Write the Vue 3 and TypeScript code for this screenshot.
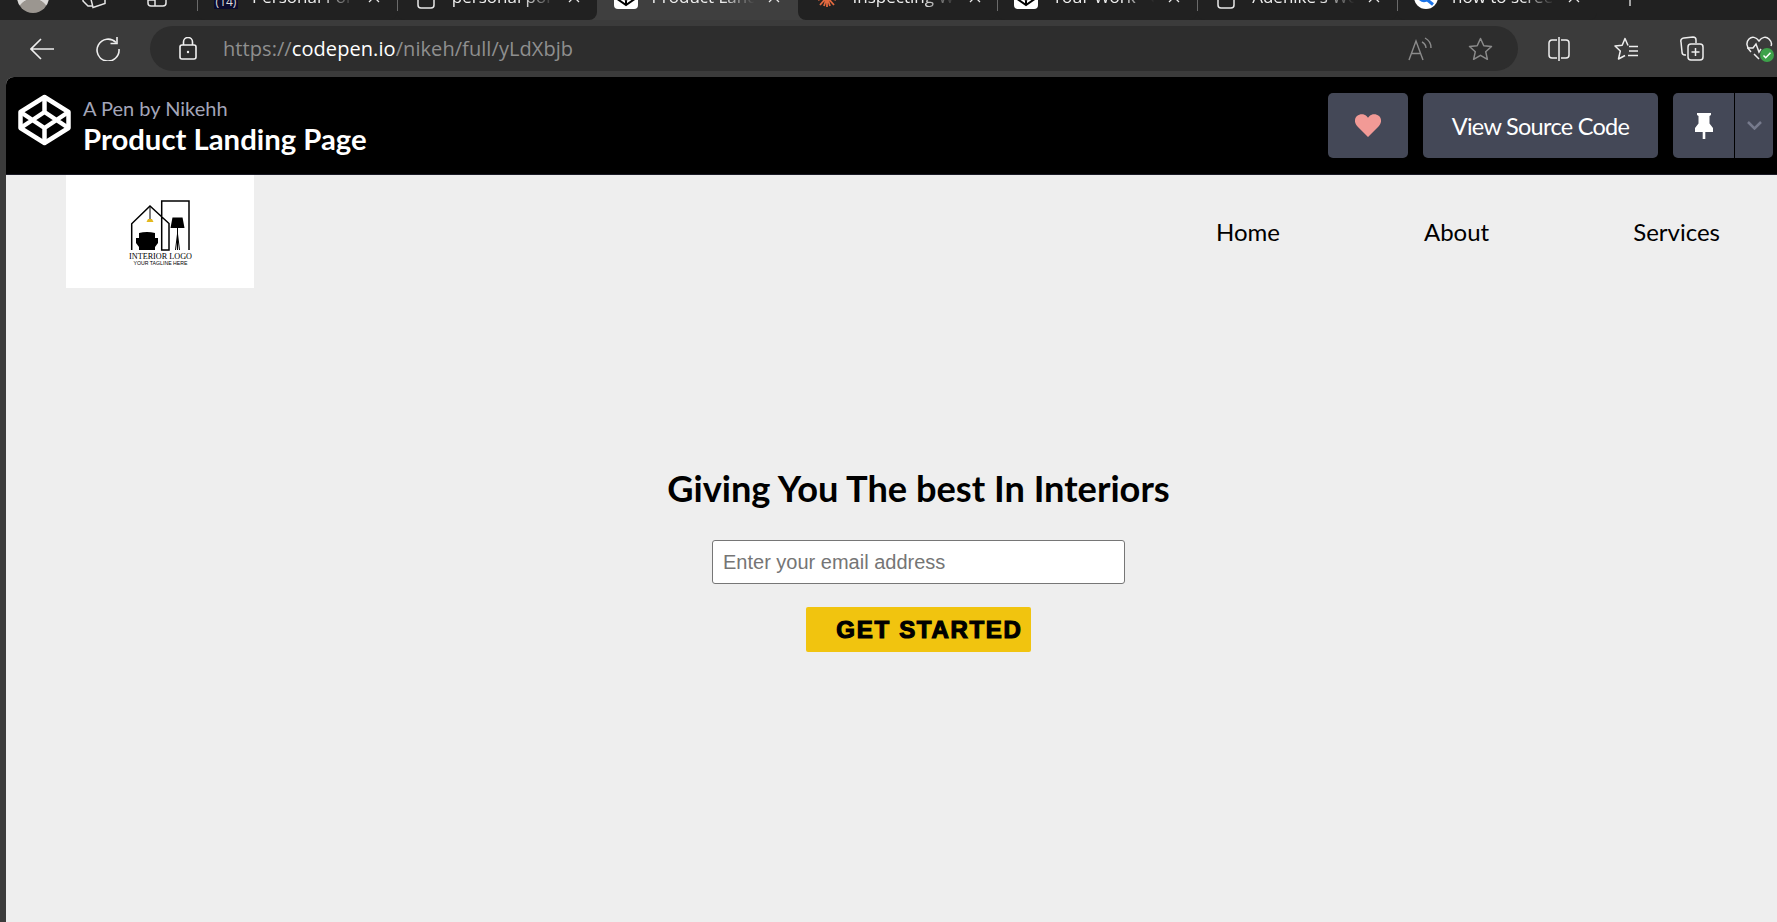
<script setup lang="ts">
interface Tab {
    title: string;
    icon: "badge" | "page" | "pen" | "spark" | "search";
    active?: boolean;
}

const tabs: Tab[] = [
    { title: "Personal Portfolio", icon: "badge" },
    { title: "personal portfolio", icon: "page" },
    { title: "Product Landing Page", icon: "pen", active: true },
    { title: "Inspecting Web", icon: "spark" },
    { title: "Your Work - CodePen", icon: "pen" },
    { title: "Adenike's Website", icon: "page" },
    { title: "how to screenshot", icon: "search" },
];

const navLinks = ["Home", "About", "Services"];
</script>

<template>
    <div class="browser">
        <div class="tabstrip">
            <div class="strip-start">
                <span class="avatar"></span>
                <svg class="strip-icon workspaces" width="24" height="24" viewBox="0 0 24 24" fill="none" stroke="#e6e6e6" stroke-width="1.5">
                    <path d="M1 10v6l5 5h4" />
                    <path d="M8 10l3 12.500 12-4V10" />
                </svg>
                <svg class="strip-icon tabs-icon" width="20" height="24" viewBox="0 0 20 24" fill="none" stroke="#e6e6e6" stroke-width="1.5">
                    <rect x="1" y="4" width="18" height="18" rx="3" />
                    <path d="M1 16h7v6" />
                </svg>
            </div>
            <div
                v-for="tab in tabs"
                :key="tab.title"
                :class="['tab', { 'tab-active': tab.active }]"
            >
                <span class="tab-icon">
                    <span v-if="tab.icon === 'badge'" class="fav-badge">(14)</span>
                    <svg v-else-if="tab.icon === 'page'" width="18" height="24" viewBox="0 0 18 24" fill="none" stroke="#e8e8e8" stroke-width="1.5">
                        <rect x="1" y="2" width="16" height="21" rx="3" />
                    </svg>
                    <svg v-else-if="tab.icon === 'pen'" width="24" height="24" viewBox="0 0 24 24">
                        <rect width="24" height="24" rx="4" fill="#fff" />
                        <path d="M12 4l8 5.500v5L12 20l-8-5.500v-5zM4 9.500l8 5.500 8-5.500M4 14.500l8-5.500 8 5.500M12 4v5M12 15v5" fill="none" stroke="#000" stroke-width="2" />
                    </svg>
                    <svg v-else-if="tab.icon === 'spark'" width="20" height="20" viewBox="0 0 20 20" stroke="#e2693f" stroke-width="1.800">
                        <path d="M10 10V20M10 10L3 18M10 10l7 8M10 10L1 13M10 10l9 3M10 10L0 8M10 10l10-2M10 10l-3 9M10 10l3 9" />
                    </svg>
                    <svg v-else width="24" height="24" viewBox="0 0 24 24">
                        <circle cx="12" cy="12" r="12" fill="#fff" />
                        <circle cx="10" cy="11" r="5" fill="none" stroke="#1a73e8" stroke-width="2.500" />
                        <path d="M13.500 15l5.500 4.500" stroke="#1a73e8" stroke-width="3" />
                    </svg>
                </span>
                <span class="tab-title">{{ tab.title }}</span>
                <svg class="tab-close" width="12" height="12" viewBox="0 0 12 12" stroke="#e8e8e8" stroke-width="1.300">
                    <path d="M1 1l10 10M11 1L1 11" />
                </svg>
            </div>
            <svg class="new-tab" width="14" height="14" viewBox="0 0 14 14" stroke="#e8e8e8" stroke-width="1.300">
                <path d="M7 0v14M0 7h14" />
            </svg>
        </div>

        <div class="toolbar">
            <svg class="tool back" width="24" height="22" viewBox="0 0 24 22" fill="none" stroke="#eee" stroke-width="1.600">
                <path d="M24 11H1M11 1L1 11l10 10" />
            </svg>
            <svg class="tool reload" width="24" height="24" viewBox="0 0 24 24" fill="none" stroke="#eee" stroke-width="1.600">
                <path d="M20 5.500A11 11 0 1 0 23 12" />
                <path d="M21 0v6.500h-6.500" />
            </svg>
            <div class="address">
                <svg class="lock" width="18" height="23" viewBox="0 0 18 23" fill="none" stroke="#f0f0f0" stroke-width="1.600">
                    <rect x="1" y="8" width="16" height="14" rx="2" />
                    <path d="M4.500 8V5a4.500 4.500 0 0 1 9 0v3" />
                    <circle cx="9" cy="15" r="1.200" fill="#f0f0f0" stroke="none" />
                </svg>
                <span class="url">https://<b>codepen.io</b>/nikeh/full/yLdXbjb</span>
                <svg class="read-aloud" width="24" height="24" viewBox="0 0 24 24" fill="none" stroke="#8b8b8b" stroke-width="1.400">
                    <path d="M1 23L8 4l7 19M3.500 16.500h9" />
                    <path d="M14 5a7 7 0 0 1 4 6M17 1a11 11 0 0 1 6 10" />
                </svg>
                <svg class="fav-star" width="25" height="24" viewBox="0 0 25 24" fill="none" stroke="#8b8b8b" stroke-width="1.500">
                    <path d="M12.500 1.500l3.300 7.200 7.700.800-5.800 5.200 1.700 7.600-6.900-4-6.900 4 1.700-7.600L1.500 9.500l7.700-.8z" stroke-linejoin="round" />
                </svg>
            </div>
            <div class="toolbar-end">
                <svg class="split-icon" width="22" height="24" viewBox="0 0 22 24" fill="none" stroke="#eee" stroke-width="1.500">
                    <path d="M9 3H4a3 3 0 0 0-3 3v12a3 3 0 0 0 3 3h5M13 3h5a3 3 0 0 1 3 3v12a3 3 0 0 1-3 3h-5M11 0v24" />
                </svg>
                <svg width="24" height="24" viewBox="0 0 24 24" fill="none" stroke="#eee" stroke-width="1.500">
                    <path d="M14 8.500l-3-7-2.800 6.800L1 9l5.300 5-1.800 8 6.500-3.500" stroke-linejoin="round" />
                    <path d="M15 9.500h9M15 14h9M14 18.500h10" />
                </svg>
                <svg width="24" height="25" viewBox="0 0 24 25" fill="none" stroke="#eee" stroke-width="1.500">
                    <path d="M6 19H5a3 3 0 0 1-3-3L1 6a3 3 0 0 1 3-4l9-1a3 3 0 0 1 3 3v3" />
                    <rect x="8" y="8" width="15" height="16" rx="3" />
                    <path d="M15.500 12v8M11.500 16h8" />
                </svg>
                <span class="health">
                    <svg width="27" height="25" viewBox="0 0 27 25" fill="none" stroke="#eee" stroke-width="1.500">
                        <path d="M5 16C0 11 0 6 3 3c3-3 7-2 10 2 3-4 7-5 10-2 2 2 3 5 2 7" />
                        <path d="M1 12h6l3-4 3 8 2-3M8 18l5 5" />
                    </svg>
                    <span class="health-dot">
                        <svg width="10" height="10" viewBox="0 0 10 10" fill="none" stroke="#fff" stroke-width="1.500">
                            <path d="M1.500 5.500l2.200 2.200 4.800-5" />
                        </svg>
                    </span>
                </span>
            </div>
        </div>

        <div class="viewport">
            <header class="pen-bar">
                <svg class="pen-logo" width="53" height="52" viewBox="0 0 53 52" fill="none" stroke="#fff" stroke-width="4.500" stroke-linejoin="round">
                    <path d="M26.500 3L50.500 18V34L26.500 49 2.500 34V18z" />
                    <path d="M2.500 18l24 16 24-16M2.500 34l24-16 24 16M26.500 3v15M26.500 34v15" />
                </svg>
                <div class="pen-meta">
                    <span class="pen-author">A Pen by Nikehh</span>
                    <h1 class="pen-title">Product Landing Page</h1>
                </div>
                <div class="pen-actions">
                    <button class="pen-btn heart-btn" aria-label="Love">
                        <svg width="26" height="23" viewBox="0 0 26 23">
                            <path d="M13 23L2.500 12.500C-.8 9-.8 4.500 2 2s7-2.500 9.500 0L13 3.700 14.500 2C17-.5 21.200-.5 24 2s2.800 7-.5 10.500z" fill="#f29a96" />
                        </svg>
                    </button>
                    <button class="pen-btn source-btn">View Source Code</button>
                    <div class="pin-group">
                        <button class="pen-btn pin-btn" aria-label="Pin">
                            <svg width="18" height="26" viewBox="0 0 18 26" fill="#fff">
                                <path d="M2 0h14v2l-1.500 1v7.500L18 15v4H0v-4l3.500-4.500V3L2 2z" />
                                <rect x="7.700" y="19" width="2.600" height="7" />
                            </svg>
                        </button>
                        <button class="pen-btn drop-btn" aria-label="More">
                            <svg width="15" height="9" viewBox="0 0 15 9" fill="none" stroke="#767a8c" stroke-width="2.500">
                                <path d="M1 1l6.500 6.500L14 1" />
                            </svg>
                        </button>
                    </div>
                </div>
            </header>

            <main class="page">
                <nav class="site-nav">
                    <div class="site-logo">
                        <svg width="188" height="113" viewBox="0 0 188 113">
                            <g transform="translate(0 1)">
                                <path d="M65.700 74V47.700L84 30l19 17.500V74h-7.300V25H123v49" fill="none" stroke="#000" stroke-width="1.500" />
                                <path d="M84 30v13" stroke="#000" />
                                <path d="M82 43h4l1.500 3h-7z" fill="#e3b81c" />
                                <path d="M70 62h3v-5q8-2 16 0v5h3v5l-3 4v3H73v-3l-3-4z" fill="#000" />
                                <path d="M106.500 41.500h10l2 10.500h-14z" fill="#000" />
                                <path d="M111.500 52v22M111.500 58l-2 16M111.500 58l2 16" stroke="#000" />
                            </g>
                            <text class="logo-name" x="94.500" y="84" text-anchor="middle">INTERIOR LOGO</text>
                            <text class="logo-tag" x="94.500" y="89.500" text-anchor="middle">YOUR TAGLINE HERE</text>
                        </svg>
                    </div>
                    <ul class="nav-links">
                        <li v-for="link in navLinks" :key="link">{{ link }}</li>
                    </ul>
                </nav>

                <section class="hero">
                    <h2>Giving You The best In Interiors</h2>
                    <input type="email" placeholder="Enter your email address" />
                    <button class="cta">GET STARTED</button>
                </section>
            </main>
        </div>
    </div>
</template>

<style scoped>
.browser {
    display: flex;
    flex-direction: column;
    height: 922px;
    overflow: hidden;
    background-color: #3b3b3b;
    font-family: "Open Sans", "Noto Sans", sans-serif;
}

.tabstrip {
    display: flex;
    height: 20px;
    flex-shrink: 0;
    overflow: hidden;
    background-color: #212121;
    color: #eee;
}

.strip-start {
    position: relative;
    z-index: 1;
    display: flex;
    width: 197px;
    height: 40px;
    margin-top: -23px;
    align-items: center;
    background-color: #212121;
}

.avatar {
    width: 32px;
    height: 32px;
    margin-top: -1px;
    margin-left: 17px;
    border-radius: 50%;
    background: radial-gradient(circle at 50% 105%, #9b9690 0 42%, #dcdad8 44%);
}

.strip-icon.workspaces {
    margin-left: 33px;
    margin-top: -1px;
}

.strip-icon.tabs-icon {
    margin-left: 41px;
    margin-top: -3px;
}

.tab {
    position: relative;
    z-index: 1;
    display: flex;
    flex-shrink: 0;
    align-items: center;
    box-sizing: border-box;
    width: 199.800px;
    height: 43px;
    margin-top: -23px;
    padding-left: 17px;
    background-color: #212121;
    font-size: 17px;
    border-radius: 0 0 8px 8px;
}

.tab::before {
    content: "";
    position: absolute;
    left: 0;
    top: 23px;
    width: 1px;
    height: 11px;
    background-color: #6a6a6a;
}

.tab-active {
    z-index: 0;
    width: 217px;
    margin-left: -8px;
    margin-right: -8px;
    padding-left: 25px;
    background-color: #3f3f3f;
    border-radius: 0;
}

.tab-active::before,
.tab-active + .tab::before {
    display: none;
}

.tab-icon {
    display: flex;
    width: 24px;
    height: 40px;
    flex-shrink: 0;
    align-items: center;
    justify-content: center;
    align-self: flex-start;
}

.fav-badge {
    width: 24px;
    height: 24px;
    background-color: #0c0c2e;
    color: #ddd;
    font-size: 12px;
    line-height: 34px;
    text-align: center;
}

.tab-title {
    width: 108px;
    height: 40px;
    margin-left: 14px;
    overflow: hidden;
    align-self: flex-start;
    line-height: 40px;
    white-space: nowrap;
    -webkit-mask-image: linear-gradient(to right, #000 65%, transparent 95%);
    mask-image: linear-gradient(to right, #000 65%, transparent 95%);
}

.tab-close {
    align-self: flex-start;
    margin-left: 8px;
    margin-top: 14px;
}

.new-tab {
    margin-left: 26px;
    margin-top: -8px;
}

.toolbar {
    display: flex;
    height: 57px;
    flex-shrink: 0;
    align-items: center;
    background-color: #3b3b3b;
}

.back {
    margin-left: 30px;
}

.reload {
    margin-left: 42px;
}

.address {
    display: flex;
    width: 1368px;
    height: 45px;
    margin-left: 30px;
    align-items: center;
    border-radius: 23px;
    background-color: #2d2d2d;
}

.lock {
    margin-left: 29px;
}

.url {
    margin-left: 26px;
    flex: 1;
    color: #8f8f8f;
    font-size: 20px;
    letter-spacing: 0.070px;
}

.url b {
    color: #fff;
    font-weight: 400;
}

.fav-star {
    margin-left: 36px;
    margin-right: 25px;
}

.toolbar-end {
    display: flex;
    margin-left: 30px;
    gap: 42px;
    align-items: center;
}

.split-icon {
    margin-right: 2px;
}

.health {
    position: relative;
    display: flex;
}

.health-dot {
    position: absolute;
    right: -1px;
    bottom: -1px;
    display: flex;
    width: 14px;
    height: 14px;
    align-items: center;
    justify-content: center;
    border-radius: 50%;
    background-color: #3da24a;
}

.viewport {
    display: flex;
    flex: 1;
    flex-direction: column;
    min-height: 0;
    margin-left: 6px;
    overflow: hidden;
    border-top-left-radius: 8px;
    background-color: #eee;
}

.pen-bar {
    display: flex;
    box-sizing: border-box;
    height: 98px;
    flex-shrink: 0;
    align-items: center;
    padding-left: 12px;
    padding-right: 4px;
    border-bottom: 1px solid #1b1b26;
    background-color: #000;
    font-family: Lato, sans-serif;
}

.pen-logo {
    flex-shrink: 0;
    margin-top: -12px;
}

.pen-meta {
    display: flex;
    flex-direction: column;
    margin-top: 2px;
    margin-left: 12px;
}

.pen-author {
    color: #a3a5b8;
    font-size: 20px;
    line-height: 25px;
}

.pen-title {
    margin: 0;
    color: #fff;
    font-size: 29.300px;
    font-weight: 700;
    line-height: 36px;
}

.pen-actions {
    display: flex;
    margin-left: auto;
    gap: 15px;
}

.pen-btn {
    display: flex;
    height: 65px;
    align-items: center;
    justify-content: center;
    border: none;
    border-radius: 5px;
    background-color: #444857;
    color: #fff;
    font-family: Lato, sans-serif;
}

.heart-btn {
    width: 80px;
}

.source-btn {
    width: 235px;
    font-size: 23.500px;
    letter-spacing: -0.700px;
}

.pin-group {
    display: flex;
}

.pin-btn {
    width: 62px;
    border-radius: 5px 0 0 5px;
    border-right: 1px solid #000;
}

.drop-btn {
    width: 38px;
    border-radius: 0 5px 5px 0;
}

.page {
    flex: 1;
    background-color: #eee;
}

.site-nav {
    display: flex;
    height: 113px;
    align-items: center;
    padding-left: 60px;
    padding-right: 57px;
}

.site-logo {
    display: flex;
    width: 188px;
    height: 113px;
    background-color: #fff;
}

.logo-name {
    font-family: "Liberation Serif", serif;
    font-size: 8.200px;
}

.logo-tag {
    font-family: "Liberation Sans", sans-serif;
    font-size: 5.200px;
}

.nav-links {
    display: flex;
    margin: 0 0 0 auto;
    padding: 0;
    gap: 144px;
    list-style: none;
    color: #000;
    font-family: Lato, sans-serif;
    font-size: 24px;
}

.hero {
    display: flex;
    flex-direction: column;
    align-items: center;
    padding-top: 178px;
    padding-left: 54px;
}

.hero h2 {
    margin: 0;
    color: #000;
    font-family: Lato, sans-serif;
    font-size: 36.200px;
    font-weight: 700;
    line-height: 44px;
}

.hero input {
    box-sizing: border-box;
    width: 413px;
    height: 44px;
    margin-top: 30px;
    padding: 0 10px;
    border: 1px solid #767676;
    border-radius: 3px;
    background-color: #fff;
    font-family: "Liberation Sans", Arial, sans-serif;
    font-size: 20px;
}

.hero input::placeholder {
    color: #757575;
}

.cta {
    box-sizing: border-box;
    width: 225px;
    height: 45px;
    margin-top: 23px;
    padding: 0 0 0 22px;
    border: none;
    border-radius: 2px;
    background-color: #f1c40f;
    color: #000;
    font-family: "Liberation Sans", Arial, sans-serif;
    font-size: 24px;
    font-weight: 700;
    letter-spacing: 1.700px;
    white-space: nowrap;
    -webkit-text-stroke: 1.200px #000;
}
</style>
